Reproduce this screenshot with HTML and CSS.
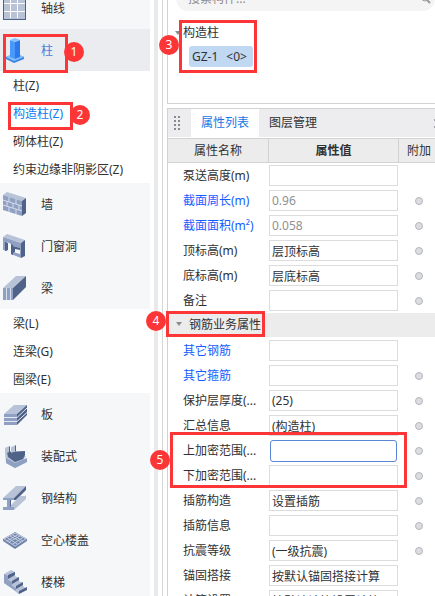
FILE: index.html
```html
<!DOCTYPE html>
<html lang="zh-CN">
<head>
<meta charset="utf-8">
<title>构件属性</title>
<link rel="stylesheet" href="styles.css">
</head>
<body>
<div class="app">
  <nav class="sidebar">
    <button class="category"><svg class="icon" viewBox="0 0 24 24"><path fill="#4f6288" d="M0 0h23v24H0z"/><path fill="#b9c3d8" d="M1 1h21v22H1z"/><path stroke="#fff" d="M7.500 1v21M14.500 1v21M1 7.500h21M1 15.500h21"/></svg>轴线</button>
    <button class="category active"><svg class="icon" viewBox="0 0 24 24"><path fill="#3d84e6" d="M3 19l9-4 9 4v2l-10 4-8-4z"/><path fill="#85c0ff" d="M3 19l9-4 9 4-10 4z"/><path fill="#4b98fb" d="M7 2l5 2v17l-5-2z"/><path fill="#2b79ed" d="M12 4l5-2v17l-5 2z"/><path fill="#85c0ff" d="M7 2l5-2 5 2-5 2z"/></svg>柱</button>
    <div class="group">
      <button class="item">柱(Z)</button>
      <button class="item selected">构造柱(Z)</button>
      <button class="item">砌体柱(Z)</button>
      <button class="item">约束边缘非阴影区(Z)</button>
    </div>
    <button class="category"><svg class="icon" viewBox="0 0 24 24"><path fill="#b9c3d8" d="M0 3l4-3 19 6-4 3z"/><path fill="#8fa0c2" d="M0 3l19 6v15L0 18z"/><path fill="#4f6288" d="M19 9l4-3v15l-4 3z"/><path fill="none" stroke="#d5dceb" d="M0 8l19 6M0 13l19 6M6 5v5M13 7v5M4 9v5M10 11v5M16 13v5M6 15v5M13 17v5"/></svg>墙</button>
    <button class="category"><svg class="icon" viewBox="0 0 24 24"><path fill="#b9c3d8" d="M0 3l4-3 18 6-4 3z"/><path fill="#8fa0c2" fill-rule="evenodd" d="M0 3l18 6v15L8 20V10L4 8v9l-4-1zM10 12v6l7 2v-6z"/><path fill="#4f6288" d="M18 9l4-3v16l-4 2zM2 8l3 1v7l-3 1zM8 10l2 1v10l-2-1zM10 12l7 2v2l-5-1v3l-2 1z"/></svg>门窗洞</button>
    <button class="category"><svg class="icon" viewBox="0 0 24 24"><path fill="#b9c3d8" d="M0 12L13 0h10L10 12z"/><path fill="#4f6288" d="M10 12L23 0v11L10 24z"/><path fill="#8fa0c2" d="M0 12h10v12H0z"/><path stroke="#d5dceb" d="M3.500 12v12M7.500 12v12"/></svg>梁</button>
    <div class="group">
      <button class="item">梁(L)</button>
      <button class="item">连梁(G)</button>
      <button class="item">圈梁(E)</button>
    </div>
    <button class="category"><svg class="icon" viewBox="0 0 24 24"><path fill="#b9c3d8" d="M1 12L11 3h13L14 12z"/><path fill="#8fa0c2" d="M1 12h13v11H1z"/><path fill="#4f6288" d="M14 12L24 3v10L14 23z"/><path fill="none" stroke="#e4e9f2" d="M1 15.500h13L24 6M1 19.500h13l10-9"/></svg>板</button>
    <button class="category"><svg class="icon" viewBox="0 0 24 24"><path fill="#b9c3d8" d="M2 9l4-2 17 5-2 3 3 3-12 6-9-5z"/><path fill="#4f6288" d="M4 8l18-1v4l-2 4-8 3-7-5z"/><path fill="#8fa0c2" d="M3 14l9 5v5l-9-5zM12 19l12-5v4l-12 6z"/><path fill="#b9c3d8" d="M2 4l4-2v6l-4 2zM8 3l5-2v6L8 9z"/><path fill="#4f6288" d="M6 2l1 1v5l-1 1zM12 1l1 1v5l-1 1z"/></svg>装配式</button>
    <button class="category"><svg class="icon" viewBox="0 0 24 24"><path fill="#b9c3d8" d="M0 12L13 0h10L11 12z"/><path fill="#4f6288" d="M11 12L23 0v4L13 14H8v7l-3-1v-7L0 14v-2z"/><path fill="#8fa0c2" d="M0 12h11v2H7v7h4v3H0v-3h4v-7H0z"/><path fill="#b9c3d8" d="M11 21L23 9v4L11 24zM8 19l9-9h5L11 21H8z"/></svg>钢结构</button>
    <button class="category"><svg class="icon" viewBox="0 0 24 24"><path fill="#7083aa" d="M0 11l12-7 12 7v2l-12 8-12-8z"/><path fill="none" stroke="#c4cddf" d="M1 11l11-6 11 6-11 7zM4 9.500l11 7M7 8l11 6M9 6.500l11 6.500M20 9.500l-11 7M17 8L6 14M15 6.500L4 13"/></svg>空心楼盖</button>
    <button class="category"><svg class="icon" viewBox="0 0 24 24"><path fill="#b9c3d8" d="M1 4l7-4 4 2v4l4 2v3l4 2v3l4 3-8 5L1 13z"/><path fill="#8fa0c2" d="M1 4l4 2v4l4 2v4l4 2v3l3 3v-1L1 13z"/><path fill="#4f6288" d="M5 5l7-3v3L5 9zM9 11l7-4v3l-7 4zM13 16l7-4v3l-7 4zM16 21l8-4v3l-8 4z"/></svg>楼梯</button>
  </nav>
  <div class="splitter"></div>
  <main class="workspace">
    <section class="tree">
      <div class="search">
        <input type="text" aria-label="搜索构件" placeholder="搜索构件...">
        <svg class="lens" viewBox="0 0 10 10"><circle cx="4" cy="4" r="3" fill="none" stroke="#999"/><path stroke="#999" stroke-width="2" d="M6 6l3 3"/></svg>
      </div>
      <div class="node"><span class="caret"></span>构造柱</div>
      <button class="member"><span>GZ-1</span><span>&lt;0&gt;</span></button>
    </section>
    <section class="properties">
      <div class="tabs">
        <svg class="grip" viewBox="0 0 6 14"><path stroke="#8b8b8f" stroke-width="2" stroke-dasharray="2" d="M1 0v14M5 0v14"/></svg>
        <button class="tab current">属性列表</button>
        <button class="tab">图层管理</button>
        <svg class="more" viewBox="0 0 1 10"><path stroke="#a5a5a9" stroke-width="2" stroke-dasharray="2 5" d="M0 1v9"/></svg>
      </div>
      <table>
        <colgroup><col class="name-col"><col class="value-col"><col></colgroup>
        <thead><tr><th>属性名称</th><th class="strong">属性值</th><th>附加</th></tr></thead>
        <tbody>
          <tr><td><label for="p1">泵送高度(m)</label></td><td><input id="p1" type="text"></td><td></td></tr>
          <tr><td><label class="blue" for="p2">截面周长(m)</label></td><td><input id="p2" class="muted" type="text" value="0.96"></td><td><i class="dot"></i></td></tr>
          <tr><td><label class="blue" for="p3">截面面积(m²)</label></td><td><input id="p3" class="muted" type="text" value="0.058"></td><td><i class="dot"></i></td></tr>
          <tr><td><label for="p4">顶标高(m)</label></td><td><input id="p4" type="text" value="层顶标高"></td><td><i class="dot"></i></td></tr>
          <tr><td><label for="p5">底标高(m)</label></td><td><input id="p5" type="text" value="层底标高"></td><td><i class="dot"></i></td></tr>
          <tr><td><label for="p6">备注</label></td><td><input id="p6" type="text"></td><td><i class="dot"></i></td></tr>
          <tr class="section"><td colspan="3"><span class="caret"></span>钢筋业务属性</td></tr>
          <tr><td><label class="blue" for="p7">其它钢筋</label></td><td><input id="p7" type="text"></td><td></td></tr>
          <tr><td><label class="blue" for="p8">其它箍筋</label></td><td><input id="p8" type="text"></td><td><i class="dot"></i></td></tr>
          <tr><td><label for="p9">保护层厚度(...</label></td><td><input id="p9" type="text" value="(25)"></td><td><i class="dot"></i></td></tr>
          <tr><td><label for="p10">汇总信息</label></td><td><input id="p10" type="text" value="(构造柱)"></td><td><i class="dot"></i></td></tr>
          <tr><td><label for="p11">上加密范围(...</label></td><td><input id="p11" class="editing" type="text"></td><td><i class="dot"></i></td></tr>
          <tr><td><label for="p12">下加密范围(...</label></td><td><input id="p12" type="text"></td><td><i class="dot"></i></td></tr>
          <tr><td><label for="p13">插筋构造</label></td><td><input id="p13" type="text" value="设置插筋"></td><td><i class="dot"></i></td></tr>
          <tr><td><label for="p14">插筋信息</label></td><td><input id="p14" type="text"></td><td><i class="dot"></i></td></tr>
          <tr><td><label for="p15">抗震等级</label></td><td><input id="p15" type="text" value="(一级抗震)"></td><td><i class="dot"></i></td></tr>
          <tr><td><label for="p16">锚固搭接</label></td><td><input id="p16" type="text" value="按默认锚固搭接计算"></td><td></td></tr>
          <tr><td><label for="p17">计算设置</label></td><td><input id="p17" type="text" value="按默认计算设置计算"></td><td></td></tr>
        </tbody>
      </table>
    </section>
  </main>
</div>
<div class="frame frame-1"></div><span class="step step-1">1</span>
<div class="frame frame-2"></div><span class="step step-2">2</span>
<div class="frame frame-3"></div><span class="step step-3">3</span>
<div class="frame frame-4"></div><span class="step step-4">4</span>
<div class="frame frame-5"></div><span class="step step-5">5</span>
</body>
</html>
```
FILE: styles.css
```css
* { box-sizing: border-box; }

body {
  margin: 0;
  height: 100vh;
  overflow: hidden;
  position: relative;
  background: #fff;
  color: #303133;
  font: 12px/18px "Noto Sans", "Noto Sans CJK SC", sans-serif;
}

button, input {
  font: inherit;
  color: inherit;
  border: 0;
  margin: 0;
  background: none;
}

.app { display: flex; height: 100%; overflow: hidden; }

/* Component categories; the list is scrolled part-way past its first row */
.sidebar {
  width: 150px;
  flex: none;
  margin-top: -13px;
}

.category {
  display: flex;
  align-items: center;
  gap: 14px;
  width: 100%;
  height: 42px;
  padding: 2px 3px 0;
  background: #f5f7f9;
  text-align: left;
}
.category.active { background: #ebecf0; color: #4a7bdc; }
.icon { width: 24px; height: 24px; flex: none; margin-bottom: 2px; overflow: visible; }

.item {
  display: block;
  width: 100%;
  height: 28px;
  padding: 2px 13px 0;
  text-align: left;
  white-space: nowrap;
}
.item.selected { color: #0a7cf0; }

.splitter { width: 4px; flex: none; margin-left: 4px; background: #e9e9e9; }

.workspace {
  flex: 1;
  min-width: 0;
  display: flex;
  flex-direction: column;
  gap: 4px;
  margin-left: 4px;
  padding-left: 4px;
  border-left: 1px solid #d6d6d6;
}

.tree {
  height: 104px;
  flex: none;
  border: solid #d2d2d2;
  border-width: 0 0 1px 1px;
}
.search {
  display: flex;
  align-items: center;
  justify-content: space-between;
  height: 24px;
  margin: -13px 0 0 8px;
  padding: 0 4px 0 12px;
  border-radius: 12px;
  background: #f4f4f4;
}
.search input { flex: 1; min-width: 0; padding: 0; }
.search input::placeholder { color: #8a8a8a; opacity: 1; }
.lens { width: 10px; height: 10px; }

.node {
  display: flex;
  align-items: center;
  gap: 2px;
  height: 22px;
  margin-top: 11px;
  padding-left: 7px;
}
.caret {
  display: inline-block;
  border: 3px solid transparent;
  border-top: 4px solid #8c8c8c;
  border-bottom: 0;
}
.member {
  display: flex;
  align-items: center;
  gap: 8px;
  height: 21px;
  margin: 2px 0 0 21px;
  padding: 0 4px 0 3px;
  min-width: 64px;
  border-radius: 3px;
  background: #c0d8f1;
}

.properties {
  flex: 1;
  min-height: 0;
  overflow: hidden;
  border: solid #d2d2d2;
  border-width: 1px 0 0 1px;
}
.tabs {
  display: flex;
  align-items: center;
  height: 29px;
  padding-left: 6px;
  border-bottom: 1px solid #fff;
  background: #ededef;
}
.grip { width: 6px; height: 14px; margin-right: 11px; }
.tab { height: 100%; padding: 0 10px; }
.tab.current { background: #fff; color: #1677e6; }
.more { width: 1px; height: 10px; margin-left: auto; }

table {
  width: 100%;
  table-layout: fixed;
  border-collapse: separate;
  border-spacing: 0;
  border-top: 1px solid #d2d2d2;
}
.name-col { width: 101px; }
.value-col { width: 130px; }
th, td { padding: 0; height: 25px; white-space: nowrap; vertical-align: middle; }
th {
  height: 24px;
  font-weight: 400;
  background: #ececec;
  border-right: 1px solid #d2d2d2;
  border-bottom: 1px solid #d2d2d2;
}
th:last-child { border-right: 0; }
th.strong { font-weight: 700; }
td { line-height: 0; }
td:nth-child(3) { text-align: center; padding-left: 4px; }
th:nth-child(3) { padding-left: 4px; }
td label { display: block; padding-left: 15px; line-height: 18px; }
td input {
  display: block;
  width: 129px;
  height: 21px;
  padding: 0 2px;
  border: 1px solid #dcdcdc;
  background: #fff;
}
td input.muted { color: #909090; }
td input.editing {
  width: 127px;
  height: 22px;
  margin-left: 1px;
  border-color: #5b86d6;
  border-radius: 3px;
}
.blue { color: #165dff; }
.section td { background: #ececec; border-bottom: 1px solid #fff; padding-left: 8px; line-height: 18px; }
.section .caret { margin: 0 7px 3px 0; }
.dot {
  display: inline-block;
  width: 8px;
  height: 8px;
  border: 1px solid #b4b6bc;
  border-radius: 50%;
  background: #dcdde0;
}

/* Numbered callouts laid over the interface */
.frame { position: absolute; border: 3px solid #fc3636; pointer-events: none; }
.frame-1 { left: 3px; top: 34px; width: 65px; height: 39px; }
.frame-2 { left: 8px; top: 102px; width: 65px; height: 28px; }
.frame-3 { left: 179px; top: 20px; width: 78px; height: 53px; }
.frame-4 { left: 166px; top: 311px; width: 99px; height: 26px; }
.frame-5 { left: 170px; top: 432px; width: 237px; height: 56px; }
.step {
  position: absolute;
  width: 20px;
  height: 20px;
  border-radius: 50%;
  background: #fc3636;
  color: #fff;
  line-height: 20px;
  text-align: center;
}
.step-1 { left: 64px; top: 42px; }
.step-2 { left: 70px; top: 105px; }
.step-3 { left: 159px; top: 35px; }
.step-4 { left: 146px; top: 311px; }
.step-5 { left: 150px; top: 450px; }
```
